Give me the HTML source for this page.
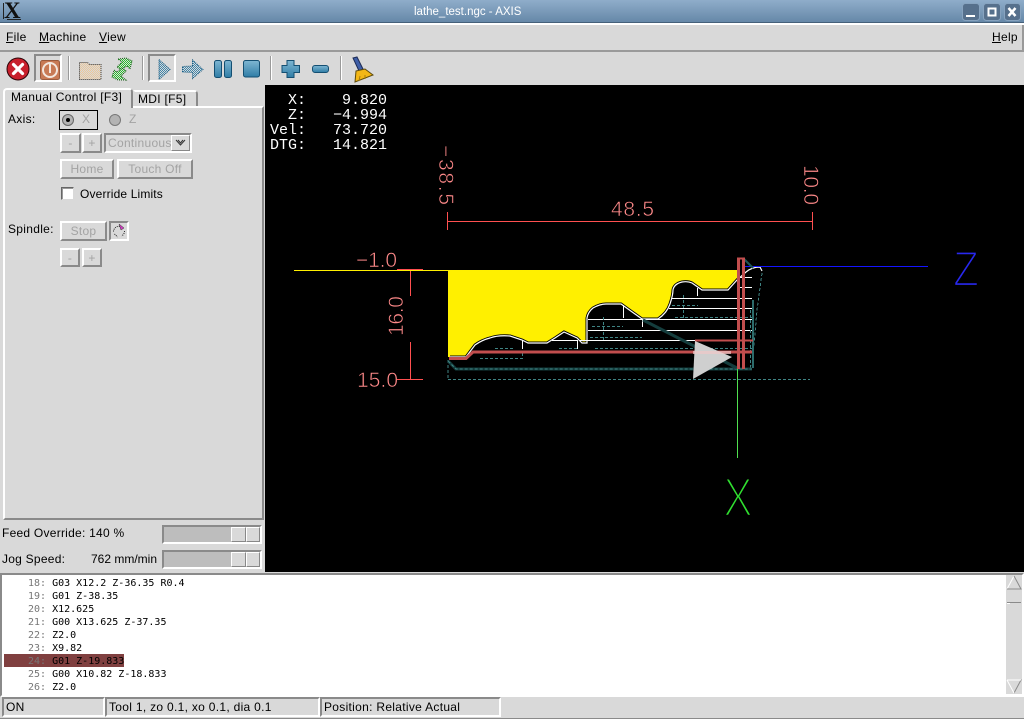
<!DOCTYPE html>
<html><head><meta charset="utf-8"><style>
html,body{margin:0;padding:0;background:#d9d9d9}
#r{position:relative;width:1024px;height:720px;overflow:hidden;background:#d9d9d9;font:12px "Liberation Sans",sans-serif;color:#000}
#r div{position:absolute;box-sizing:border-box;white-space:pre}
.t{letter-spacing:.3px;line-height:14px}
.dis{color:#a3a3a3}
.btn{border:2px solid;border-color:#fff #8a8a8a #8a8a8a #fff;text-align:center;color:#a3a3a3;line-height:16px;letter-spacing:.25px}
.sunk{border:2px solid;border-color:#8a8a8a #fff #fff #8a8a8a}
.sep{width:2px;background:linear-gradient(90deg,#9a9a9a 50%,#fff 50%)}
.code{font:10px/13px "DejaVu Sans Mono","Liberation Mono",monospace}
.n{color:#777}
.dro{font:15px/15px "Liberation Mono",monospace;color:#fff;left:270px}
.st{top:697px;height:20px;border:2px solid;border-color:#8a8a8a #fff #fff #8a8a8a;padding-left:2px;line-height:16px;letter-spacing:.3px}
</style></head><body><div id="r">

<div style="left:0;top:0;width:1024px;height:23px;background:linear-gradient(#8fadca,#6688a8);border-bottom:1px solid #45607a"></div>
<div style="left:0;top:23px;width:1024px;height:2px;background:#fff"></div>
<div style="left:4px;top:-2px;font:bold 23px/26px 'Liberation Serif',serif;color:#111">X</div>
<div style="left:3px;top:3px;width:1px;height:16px;background:#222"></div>
<div style="left:7px;top:19px;width:14px;height:1px;background:#222"></div>
<div style="left:414px;width:106px;top:4px;text-align:center;color:#fff;font-size:11.500px;line-height:16px">lathe_test.ngc - AXIS</div>
<svg style="position:absolute;left:961px;top:2px" width="62" height="20" viewBox="0 0 62 20">
<g fill="#56708c" stroke="#87a3bf"><rect x="1.5" y="1.5" width="17" height="17" rx="3"/><rect x="22.5" y="1.5" width="17" height="17" rx="3"/><rect x="43.500" y="1.5" width="16" height="17" rx="3"/></g>
<rect x="5" y="13" width="9" height="2" fill="#fff"/>
<rect x="27.500" y="6.500" width="7" height="7" fill="none" stroke="#fff" stroke-width="2"/>
<path d="M47.500 6l7 8M54.500 6l-7 8" stroke="#fff" stroke-width="2.500"/></svg>

<div class="t" style="left:6px;top:30px"><u>F</u>ile</div>
<div class="t" style="left:39px;top:30px"><u>M</u>achine</div>
<div class="t" style="left:99px;top:30px"><u>V</u>iew</div>
<div class="t" style="left:992px;top:30px"><u>H</u>elp</div>
<div style="left:0;top:50px;width:1024px;height:2px;background:#9a9a9a"></div>
<div style="left:1022px;top:25px;width:2px;height:25px;background:#9a9a9a"></div>

<!-- toolbar -->
<div style="left:34px;top:54px;width:28px;height:28px;border:2px solid;border-color:#8a8a8a #fff #fff #8a8a8a"></div>
<div style="left:148px;top:54px;width:28px;height:28px;border:2px solid;border-color:#8a8a8a #fff #fff #8a8a8a"></div>
<div class="sep" style="left:68px;top:56px;height:24px"></div>
<div class="sep" style="left:142px;top:56px;height:24px"></div>
<div class="sep" style="left:270px;top:56px;height:24px"></div>
<div class="sep" style="left:340px;top:56px;height:24px"></div>
<svg style="position:absolute;left:0;top:52px" width="400" height="34" viewBox="0 52 400 34">
<defs>
<pattern id="pb" width="2" height="2" patternUnits="userSpaceOnUse"><rect width="2" height="2" fill="#d9d9d9"/><rect width="1" height="1" fill="#3f86ab"/><rect x="1" y="1" width="1" height="1" fill="#3f86ab"/></pattern>
<pattern id="pf" width="2" height="2" patternUnits="userSpaceOnUse"><rect width="2" height="2" fill="#d9d9d9"/><rect width="1" height="1" fill="#ecc798"/><rect x="1" y="1" width="1" height="1" fill="#ecc798"/></pattern>
<pattern id="pg" width="2" height="2" patternUnits="userSpaceOnUse"><rect width="2" height="2" fill="#d9d9d9"/><rect width="1" height="1" fill="#27c02a"/><rect x="1" y="1" width="1" height="1" fill="#27c02a"/></pattern>
<linearGradient id="b" x1="0" y1="0" x2="0" y2="1"><stop offset="0" stop-color="#7fb6d2"/><stop offset="1" stop-color="#2f7da6"/></linearGradient></defs>
<circle cx="18" cy="69" r="11" fill="#c8202c" stroke="#2a0508" stroke-width="1"/>
<path d="M13.500 64.500l9 9M22.500 64.500l-9 9" stroke="#fff" stroke-width="3.200" stroke-linecap="round"/>
<rect x="40.500" y="60.500" width="19" height="19" rx="2" fill="#c87a55" stroke="#9a5a3c"/>
<circle cx="50" cy="70" r="7" fill="none" stroke="#f3e7de" stroke-width="2"/>
<rect x="49" y="64" width="2" height="9" fill="#f3e7de"/>
<path d="M79.500 62.500h8l2 2h11.500v15H79.500z" fill="url(#pf)" stroke="#333" stroke-dasharray="1 1"/>
<path d="M118 59l8-1 6 3-2 8-3-3-6 4-4-3 5-5z" fill="url(#pg)" stroke="#1c5a1c" stroke-dasharray="1 1"/>
<path d="M126 80l-8 0-6-3 2-7 3 2 5-4 4 3-5 5z" fill="url(#pg)" stroke="#1c5a1c" stroke-dasharray="1 1"/>
<path d="M159 59.500l11 10-11 10z" fill="url(#pb)" stroke="#1d5d82" stroke-dasharray="1 1"/>
<path d="M182.500 66.500l10-.5v-6l10.500 9.500-10.500 9v-6l-10-.5z" fill="url(#pb)" stroke="#1d5d82" stroke-dasharray="1 1"/>
<rect x="214.500" y="60.500" width="7" height="17" rx="2" fill="url(#b)" stroke="#144f72"/>
<rect x="224.500" y="60.500" width="7" height="17" rx="2" fill="url(#b)" stroke="#144f72"/>
<rect x="243.500" y="60.500" width="16" height="16.500" rx="2" fill="url(#b)" stroke="#144f72"/>
<path d="M287 60.500h7v5h5.500v7h-5.500v5h-7v-5h-5v-7h5z" fill="url(#b)" stroke="#144f72"/>
<rect x="312.500" y="65.500" width="16" height="7" rx="2.500" fill="url(#b)" stroke="#144f72"/>
<path d="M353 58l4-1 6 12-4 2z" fill="#3f5fa8" stroke="#1c2b55"/>
<path d="M356 71l9-2 8 6-18 7z" fill="#f3b716" stroke="#5d4a0c"/>
<path d="M360 76l-1 5M365 75l0 4" stroke="#a77d0d"/>
</svg>

<!-- notebook -->
<div style="left:3px;top:106px;width:261px;height:414px;border:2px solid;border-color:#fff #8a8a8a #8a8a8a #fff"></div>
<div style="left:3px;top:88px;width:130px;height:20px;background:#d9d9d9;border:2px solid;border-color:#fff #8a8a8a transparent #fff;border-bottom:0;border-radius:4px 4px 0 0"></div>
<div style="left:133px;top:90px;width:65px;height:16px;border:2px solid;border-color:#fff #8a8a8a transparent transparent;border-bottom:0;border-radius:0 4px 0 0"></div>
<div class="t" style="left:11px;top:90px">Manual Control [F3]</div>
<div class="t" style="left:138px;top:92px">MDI [F5]</div>

<div class="t" style="left:8px;top:112px">Axis:</div>
<div style="left:59px;top:110px;width:39px;height:20px;border:1px solid #000"></div>
<svg style="position:absolute;left:60px;top:111px" width="70" height="18"><circle cx="8" cy="9" r="5.500" fill="#b3b3b3" stroke="#666"/><circle cx="8" cy="9" r="2" fill="#000"/><circle cx="55" cy="9" r="5.500" fill="#b3b3b3" stroke="#777"/></svg>
<div class="t dis" style="left:82px;top:112px">X</div>
<div class="t dis" style="left:129px;top:112px">Z</div>

<div class="btn" style="left:60px;top:133px;width:21px;height:20px">-</div>
<div class="btn" style="left:82px;top:133px;width:20px;height:20px">+</div>
<div class="sunk" style="left:104px;top:133px;width:88px;height:20px"></div>
<div class="t dis" style="left:108px;top:136px">Continuous</div>
<div style="left:171px;top:135px;width:19px;height:16px;background:#d9d9d9;border:1px solid;border-color:#fff #888 #888 #fff"></div>
<svg style="position:absolute;left:174px;top:139px" width="13" height="8"><path d="M2 1l4.500 5 4.500-5M4 1l2.500 3 2.500-3" fill="none" stroke="#333"/></svg>

<div class="btn" style="left:60px;top:159px;width:54px;height:20px">Home</div>
<div class="btn" style="left:117px;top:159px;width:76px;height:20px">Touch Off</div>

<div style="left:61px;top:187px;width:13px;height:13px;background:#fff;border:1px solid;border-color:#666 #d9d9d9 #d9d9d9 #666;box-shadow:inset 1px 1px 0 #999"></div>
<div class="t" style="left:80px;top:187px;letter-spacing:.15px">Override Limits</div>

<div class="t" style="left:8px;top:222px">Spindle:</div>
<div class="btn" style="left:60px;top:221px;width:47px;height:20px">Stop</div>
<div class="sunk" style="left:109px;top:221px;width:20px;height:20px"></div>
<svg style="position:absolute;left:111px;top:223px" width="16" height="16"><path d="M2.500 8.500a5.500 5.500 0 0 1 7-5M13.500 8a5.500 5.500 0 0 1-3 5M3.500 11l3 3" fill="none" stroke="#222" stroke-dasharray="1 1"/><path d="M8 1l5 4-3 2z" fill="#d040c0" stroke="#333" stroke-width=".5"/></svg>
<div class="btn" style="left:60px;top:248px;width:20px;height:19px">-</div>
<div class="btn" style="left:82px;top:248px;width:20px;height:19px">+</div>

<div class="t" style="left:2px;top:526px;letter-spacing:.25px">Feed Override: 140 %</div>
<div class="t" style="left:2px;top:552px;letter-spacing:.25px">Jog Speed:</div>
<div class="t" style="left:91px;top:552px;letter-spacing:0">762 mm/min</div>
<div style="left:162px;top:525px;width:100px;height:19px;background:#bdbdbd;border:2px solid;border-color:#8a8a8a #fff #fff #8a8a8a"></div>
<div style="left:162px;top:550px;width:100px;height:19px;background:#bdbdbd;border:2px solid;border-color:#8a8a8a #fff #fff #8a8a8a"></div>
<div style="left:231px;top:527px;width:15px;height:15px;background:#d9d9d9;border:1px solid;border-color:#fff #888 #888 #fff"></div>
<div style="left:246px;top:527px;width:14px;height:15px;background:#d9d9d9;border:1px solid;border-color:#fff #888 #888 #fff"></div>
<div style="left:231px;top:552px;width:15px;height:15px;background:#d9d9d9;border:1px solid;border-color:#fff #888 #888 #fff"></div>
<div style="left:246px;top:552px;width:14px;height:15px;background:#d9d9d9;border:1px solid;border-color:#fff #888 #888 #fff"></div>

<!-- canvas -->
<div style="left:265px;top:85px;width:759px;height:487px;background:#000"></div>
<svg style="position:absolute;left:265px;top:85px" width="759" height="487" viewBox="265 85 759 487" shape-rendering="crispEdges">
<g font-family="'Liberation Sans',sans-serif" fill="#ff8a8a" stroke="#000" stroke-width=".6" shape-rendering="auto">
<text x="0" y="0" font-size="21" transform="translate(439,145) rotate(90)" textLength="60">−38.5</text>
<text x="0" y="0" font-size="21" transform="translate(804,165) rotate(90)" textLength="40">10.0</text>
<text x="611" y="216" font-size="21" textLength="43">48.5</text>
<text x="356" y="267" font-size="21" textLength="41">−1.0</text>
<text x="0" y="0" font-size="21" transform="translate(403,336) rotate(-90)" textLength="40">16.0</text>
<text x="357" y="387" font-size="21" textLength="41">15.0</text>
</g>
<text x="953" y="286" font-family="'Liberation Sans',sans-serif" font-size="50" textLength="26" lengthAdjust="spacingAndGlyphs" fill="#2828ee" stroke="#000" stroke-width="2.200" shape-rendering="auto">Z</text>
<text x="723" y="516" font-family="'Liberation Sans',sans-serif" font-size="55" textLength="30" lengthAdjust="spacingAndGlyphs" fill="#30e030" stroke="#000" stroke-width="2.600" shape-rendering="auto">X</text>

<g stroke="#ff5050" fill="none">
<path d="M447.500 212v18M812.500 212v18M447 221.500h366M397 269.500h26M397 379.500h26M410.500 270v26M410.500 342v38"/>
</g>
<path d="M294 270.500h154" stroke="#fff000" fill="none"/>
<path d="M448 270H737V280L728 290H702L692 283Q688 281 682 282Q674 284 673 290Q673 295 670 304Q667 313 658 319H642L621 304H606Q600 304 593 308Q588 312 587 318V343H582L577 338 564 332 555 338 547 343H528L522 340 510 336Q498 335 490 338 482 340 475 345L466 357H448Z" fill="#fff000" shape-rendering="auto"/>
<path d="M450 357H466L475 345Q482 340 490 338 498 335 510 336L522 340 528 343H547L555 338 564 332 577 338 582 343H587V318Q588 312 593 308 600 304 606 304H621L642 319H658Q667 313 670 304 673 295 673 290 674 284 682 282 688 281 692 283L702 290H728L737 280 746 272Q752 267 760 267L762 271" fill="none" stroke="#000" stroke-width="3" shape-rendering="auto"/>
<path d="M450 357H466L475 345Q482 340 490 338 498 335 510 336L522 340 528 343H547L555 338 564 332 577 338 582 343H587V318Q588 312 593 308 600 304 606 304H621L642 319H658Q667 313 670 304 673 295 673 290 674 284 682 282 688 281 692 283L702 290H728L737 280 746 272Q752 267 760 267L762 271" fill="none" stroke="#fff" stroke-width="1.200" shape-rendering="auto"/>
<path d="M745 266.500H928" stroke="#1414ff"/>
<g stroke="#fff" fill="none">
<path d="M552 340.500h25M522.500 340v9M577.500 340v9M588 319.500h164M588 330.500h164M580 340.500h172M669 308.500h83M672 298.500h80M738 287.500h14M738 277.500h14M623.500 305v13M642.500 320v7M697.500 288v8"/>
</g>
<g stroke="#3f8484" fill="none" stroke-dasharray="3 2">
<path d="M448 379.500H810M448 360v19M480 358.500h42M522.500 353v6M495 348.500h20M559 348.500h18M595 348.500H752M675 317.500H752M592 326.500h31M590 337.500h52M672 305.500h26M603.500 317v23M683.500 295v23M762 273l-5 37-5 58M750.500 310v58"/>
</g>
<g fill="none" shape-rendering="auto">
<path d="M448 361l8 8H752" stroke="#143d3d" stroke-width="3"/>
<path d="M448 361l8 8H752" stroke="#3f8484" stroke-dasharray="3 2" stroke-width="1"/>
<path d="M643 320l94 48" stroke="#143d3d" stroke-width="3"/>
<path d="M753 368V300" stroke="#2c6b6b" stroke-width="2"/>
<path d="M743 258l10 10" stroke="#1d5555" stroke-width="2"/>
</g>
<g stroke="#c24e4e" fill="none">
<path d="M449 358.500h17l7-6.500H752" stroke-width="3" shape-rendering="auto"/>
<path d="M738.500 259v110M743.500 259v110" stroke-width="3"/>
<path d="M737 258.500h8" stroke-width="2"/>
<path d="M695 340.500h58" stroke-width="2"/>
</g>
<path d="M695 341L732 357 693 379Z" fill="#cfcfcf" shape-rendering="auto"/>
<path d="M693 352.500h38" stroke="#f0c8c8" stroke-width="3" opacity=".7"/>
<path d="M737.500 369V458" stroke="#50e050"/>
</svg>
<div class="dro" style="top:93px">  X:    9.820</div>
<div class="dro" style="top:108px">  Z:   −4.994</div>
<div class="dro" style="top:123px">Vel:   73.720</div>
<div class="dro" style="top:138px">DTG:   14.821</div>

<!-- code -->
<div style="left:0;top:573px;width:1024px;height:124px;background:#fff;border:2px solid;border-color:#8a8a8a #fff #fff #8a8a8a"></div>
<div style="left:4px;top:654px;width:120px;height:13px;background:#804040"></div>
<div class="code" style="left:28px;top:577px"><span class="n">18:</span> G03 X12.2 Z-36.35 R0.4
<span class="n">19:</span> G01 Z-38.35
<span class="n">20:</span> X12.625
<span class="n">21:</span> G00 X13.625 Z-37.35
<span class="n">22:</span> Z2.0
<span class="n">23:</span> X9.82
<span class="n">24:</span> G01 Z-19.833
<span class="n">25:</span> G00 X10.82 Z-18.833
<span class="n">26:</span> Z2.0</div>
<div style="left:1006px;top:575px;width:16px;height:119px;background:#d9d9d9"></div>
<svg style="position:absolute;left:1006px;top:575px" width="16" height="119"><path d="M8 1L1 14H15Z" fill="#d9d9d9"/><path d="M1 14L8 1" stroke="#fff"/><path d="M8 1L15 14H1" stroke="#8a8a8a" fill="none"/><path d="M1 27.500H15" stroke="#8a8a8a" stroke-width="1"/><path d="M1 28.500H4" stroke="#fff"/><path d="M1 105L8 118 15 105Z" fill="#d9d9d9"/><path d="M1 105H15L8 118" stroke="#8a8a8a" fill="none"/><path d="M1 105L8 118" stroke="#fff"/><path d="M1 105H15" stroke="#fff"/></svg>

<!-- status -->
<div class="st" style="left:2px;width:103px">ON</div>
<div class="st" style="left:105px;width:215px">Tool 1, zo 0.1, xo 0.1, dia 0.1</div>
<div class="st" style="left:320px;width:181px">Position: Relative Actual</div>
<div style="left:0;top:718px;width:1024px;height:2px;background:linear-gradient(#8a8a8a 50%,#fff 50%)"></div>
</div></body></html>
